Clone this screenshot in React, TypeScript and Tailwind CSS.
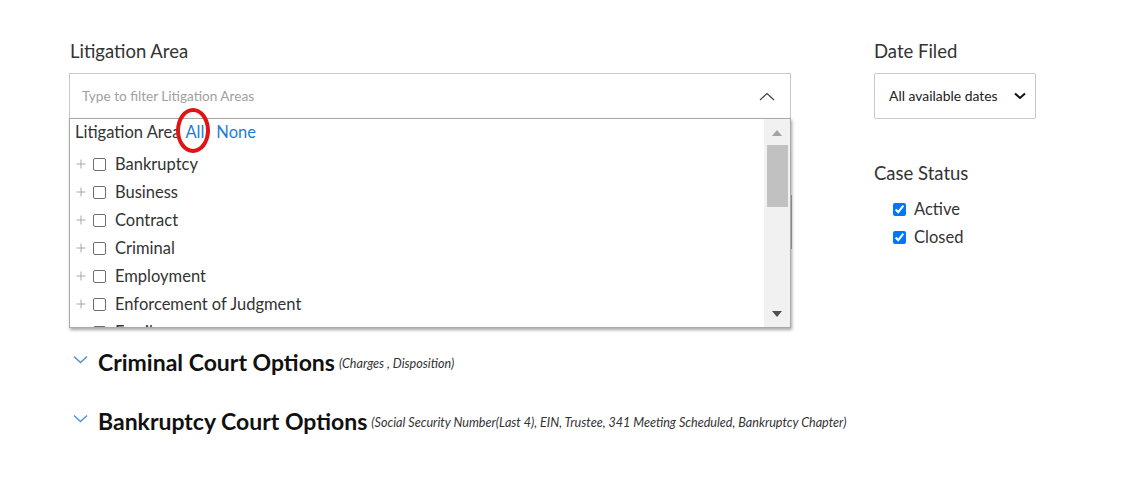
import React from 'react';

const areas = [
  'Bankruptcy',
  'Business',
  'Contract',
  'Criminal',
  'Employment',
  'Enforcement of Judgment',
  'Family',
];

function Plus() {
  return (
    <svg width="10" height="10" viewBox="0 0 10 10" className="shrink-0">
      <path d="M5 0.5V9.5M0.5 5H9.5" stroke="#a8a8a8" strokeWidth="1" fill="none" />
    </svg>
  );
}

function AccordionChevron() {
  return (
    <svg width="15" height="9" viewBox="0 0 15 9" className="shrink-0 mt-[-6px]">
      <path d="M1 1.5L7.5 7.5L14 1.5" stroke="#4d8fd6" strokeWidth="1.4" fill="none" />
    </svg>
  );
}

export default function App() {
  return (
    <div className="w-[1125px] h-[485px] bg-white font-['Lato',sans-serif] text-[#333] overflow-hidden">
      <div className="flex pl-[69px] pt-[39px]">
        {/* left column */}
        <div className="w-[722px] shrink-0 flex flex-col">
          <div className="h-[24px] leading-[24px] text-[18.5px] pl-[1px] text-[#333]">Litigation Area</div>
          <div className="relative mt-[10px] h-[46px] border border-[#c8c8c8] flex items-center pl-[12px] pr-[15px]">
            <span className="text-[13.6px] text-[#a0a0a0] flex-1 mt-[1px]">Type to filter Litigation Areas</span>
            <svg width="16" height="9" viewBox="0 0 16 9">
              <path d="M1 8L8 1.5L15 8" stroke="#444" strokeWidth="1.2" fill="none" />
            </svg>

            {/* open dropdown */}
            <div className="absolute left-[-1px] top-[44px] w-[722px] h-[210px] bg-white border border-[#a9a9a9] shadow-[1px_2px_3px_rgba(0,0,0,0.35)] z-10 flex">
              <div className="flex-1 overflow-hidden">
                <div className="h-[26px] flex items-center pl-[5px] text-[16.5px]">
                  <span className="text-[#333]">Litigation Area</span>
                  <span className="ml-[5px] text-[#1e7bd6]">All</span>
                  <span className="ml-[12px] text-[#1e7bd6]">None</span>
                </div>
                <div className="mt-[5px]">
                  {areas.map((a) => (
                    <div key={a} className="h-[28px] flex items-center pl-[6px] text-[16.5px] text-[#333]">
                      <Plus />
                      <span className="ml-[7px] w-[13px] h-[13px] border border-[#6f6f6f] rounded-[2px] shrink-0" />
                      <span className="ml-[9px]">{a}</span>
                    </div>
                  ))}
                </div>
              </div>
              <div className="w-[26px] bg-[#f1f1f1] flex flex-col items-center">
                <svg width="10" height="6" viewBox="0 0 10 6" className="mt-[11px]">
                  <path d="M0 6L5 0L10 6Z" fill="#a3a3a3" />
                </svg>
                <div className="mt-[9px] w-[21px] h-[62px] bg-[#c1c1c1]" />
                <div className="flex-1" />
                <svg width="10" height="6" viewBox="0 0 10 6" className="mb-[10px]">
                  <path d="M0 0L10 0L5 6Z" fill="#505050" />
                </svg>
              </div>
              <div className="absolute right-[-2px] top-[76px] w-[1px] h-[54px] bg-[#8a8a8a]" />
              {/* red annotation circle */}
              <div className="absolute left-[106px] top-[-11px] w-[34px] h-[45px] rounded-[50%] border-[4px] border-[#e01414]" />
            </div>
          </div>

          <div className="mt-[228px] h-[30px] flex items-center pl-[4px] whitespace-nowrap">
            <AccordionChevron />
            <span className="ml-[10px] text-[23px] font-bold text-[#111] leading-[30px]">Criminal Court Options</span>
            <span className="ml-[4px] mt-[5px] text-[12.6px] italic text-[#333]">(Charges , Disposition)</span>
          </div>
          <div className="mt-[29px] h-[30px] flex items-center pl-[4px] whitespace-nowrap">
            <AccordionChevron />
            <span className="ml-[10px] text-[23px] font-bold text-[#111] leading-[30px]">Bankruptcy Court Options</span>
            <span className="ml-[4px] mt-[5px] text-[12.6px] italic text-[#333]">
              (Social Security Number(Last 4), EIN, Trustee, 341 Meeting Scheduled, Bankruptcy Chapter)
            </span>
          </div>
        </div>

        {/* right column */}
        <div className="ml-[83px] flex flex-col">
          <div className="h-[24px] leading-[24px] text-[18.5px] text-[#333]">Date Filed</div>
          <div className="mt-[10px] w-[162px] h-[46px] border border-[#c8c8c8] rounded-[2px] flex items-center pl-[14px] pr-[9px]">
            <span className="text-[13.9px] text-[#222] flex-1 mt-[1px]">All available dates</span>
            <svg width="12" height="8" viewBox="0 0 12 8">
              <path d="M1 1.5L6 6L11 1.5" stroke="#111" strokeWidth="2" fill="none" />
            </svg>
          </div>
          <div className="mt-[42px] h-[24px] leading-[24px] text-[18.5px] text-[#333]">Case Status</div>
          <div className="mt-[10px] flex flex-col pl-[19px]">
            {['Active', 'Closed'].map((s) => (
              <label key={s} className="h-[28px] flex items-center text-[16.5px] text-[#333]">
                <input type="checkbox" defaultChecked className="w-[13px] h-[13px] m-0 accent-[#0075ff]" />
                <span className="ml-[8px]">{s}</span>
              </label>
            ))}
          </div>
        </div>
      </div>
    </div>
  );
}
